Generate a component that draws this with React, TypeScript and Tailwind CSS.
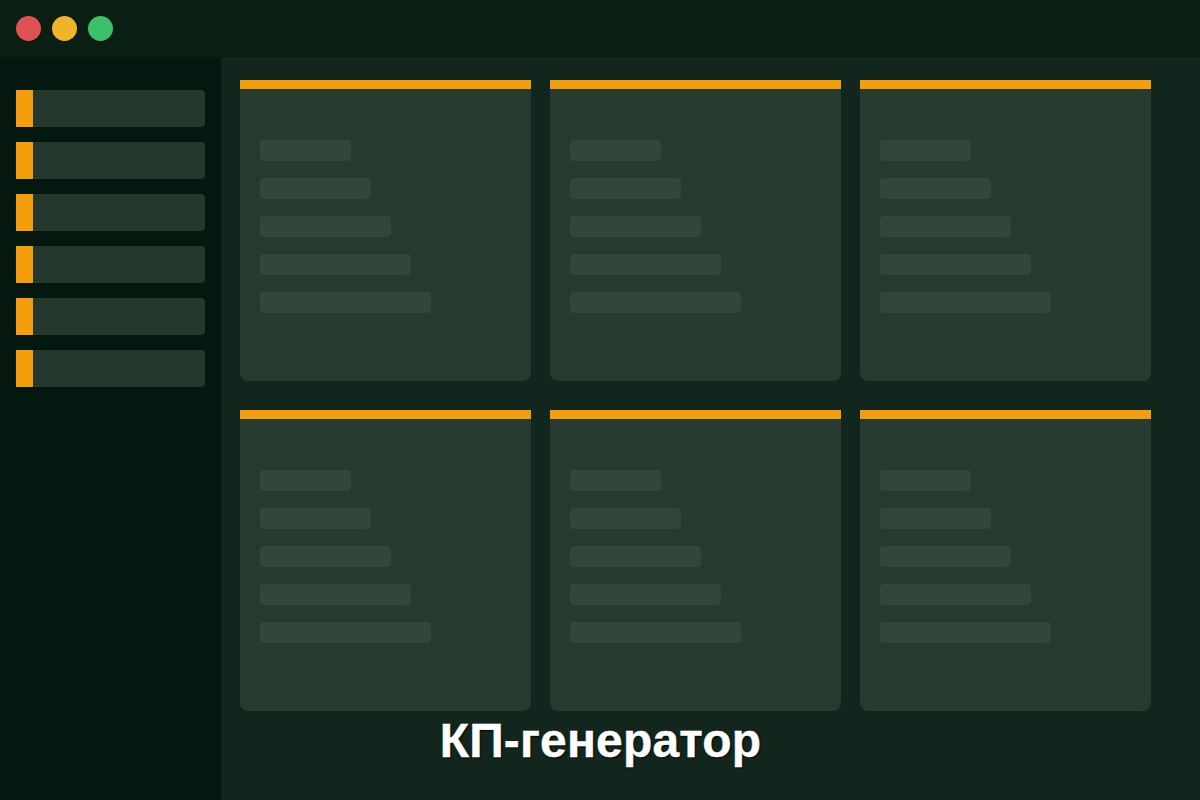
const sidebarItems = [0, 1, 2, 3, 4, 5];
const cards = [0, 1, 2, 3, 4, 5];
const lineWidths = ["w-[91px]", "w-[111px]", "w-[131px]", "w-[151px]", "w-[171px]"];

function Card() {
  return (
    <div className="h-[301px] w-[291px] overflow-hidden rounded-b-lg bg-[#263a30]">
      <div className="h-[9px] bg-[#f59e0b]" />
      <div className="flex flex-col gap-[17px] px-5 pt-[51px]">
        {lineWidths.map((w) => (
          <div key={w} className={`h-[21px] rounded ${w} bg-[#32463b]`} />
        ))}
      </div>
    </div>
  );
}

export default function App() {
  return (
    <div className="relative flex h-[800px] w-[1200px] flex-col overflow-hidden bg-[#13261d] font-['Liberation_Sans',Arial,sans-serif]">
      <div className="flex h-[57px] shrink-0 items-start gap-[11px] bg-[#0a1e14] pl-4 pt-4">
        <div className="h-[25px] w-[25px] rounded-full bg-[#e05252]" />
        <div className="h-[25px] w-[25px] rounded-full bg-[#f0b429]" />
        <div className="h-[25px] w-[25px] rounded-full bg-[#3cc168]" />
      </div>

      <div className="flex flex-1">
        <div className="flex w-[221px] shrink-0 flex-col gap-[15px] bg-[#05180f] pl-4 pt-[33px]">
          {sidebarItems.map((i) => (
            <div key={i} className="flex h-[37px] w-[189px] overflow-hidden rounded-r bg-[#24382e]">
              <div className="w-[17px] bg-[#f59e0b]" />
            </div>
          ))}
        </div>

        <div className="grid grid-cols-[repeat(3,291px)] content-start gap-x-[19px] gap-y-[29px] pl-[19px] pt-[23px]">
          {cards.map((i) => (
            <Card key={i} />
          ))}
        </div>
      </div>

      <div className="absolute inset-x-0 top-[713px] pl-[1px] text-center text-[48px] font-bold leading-[55px] tracking-[0.15px] text-white [-webkit-text-stroke:0.4px_#fff] [text-shadow:1px_1px_2px_#000]">
        КП-генератор
      </div>
    </div>
  );
}
